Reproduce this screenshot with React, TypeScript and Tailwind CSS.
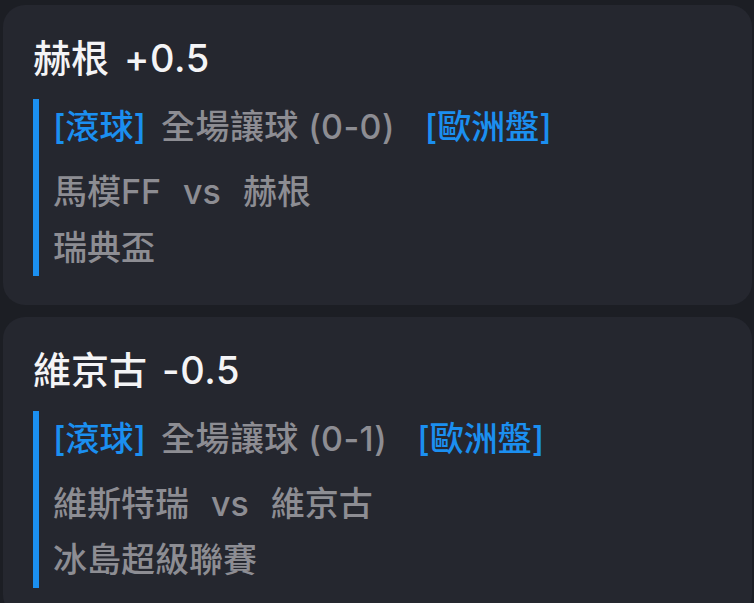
const bets = [
  {
    team: "赫根",
    line: "+0.5",
    market: "全場讓球 (0-0)",
    home: "馬模FF",
    away: "赫根",
    league: "瑞典盃",
  },
  {
    team: "維京古",
    line: "-0.5",
    market: "全場讓球 (0-1)",
    home: "維斯特瑞",
    away: "維京古",
    league: "冰島超級聯賽",
  },
];

const font = { fontFamily: 'Inter, "Noto Sans CJK TC", sans-serif' };

export default function App() {
  return (
    <div className="min-h-screen overflow-hidden bg-[#1c1e24] pt-[5px]" style={font}>
      <div className="flex flex-col gap-[12px] pl-[3px] pr-[2px]">
        {bets.map((bet) => (
          <div
            key={bet.team}
            className="h-[300px] rounded-[22px] bg-[#25272f] pl-[30px] pr-6 pt-[29px]"
          >
            <h2 className="text-[38px] font-medium leading-[48px] text-[#f4f4f6]">
              <span>{bet.team}</span>
              <span className="ml-[15px] tracking-[0.6px]">{bet.line}</span>
            </h2>
            <div className="mt-[17px] border-l-[6px] border-[#1b8ff0] pl-[14px]">
              <div className="text-[34px] font-medium leading-[56px] text-[#8d8d93]">
                <span className="text-[#1b8ff0]">[滾球]</span>
                <span className="ml-[15px] tracking-[0.4px]">{bet.market}</span>
                <span className="ml-[30px] text-[#1b8ff0]">[歐洲盤]</span>
              </div>
              <div className="mt-[9px] text-[34px] font-medium leading-[56px] text-[#8d8d93]">
                <span>{bet.home}</span>
                <span className="mx-[22px]">vs</span>
                <span>{bet.away}</span>
              </div>
              <div className="text-[34px] font-medium leading-[56px] text-[#8d8d93]">
                {bet.league}
              </div>
            </div>
          </div>
        ))}
      </div>
    </div>
  );
}
